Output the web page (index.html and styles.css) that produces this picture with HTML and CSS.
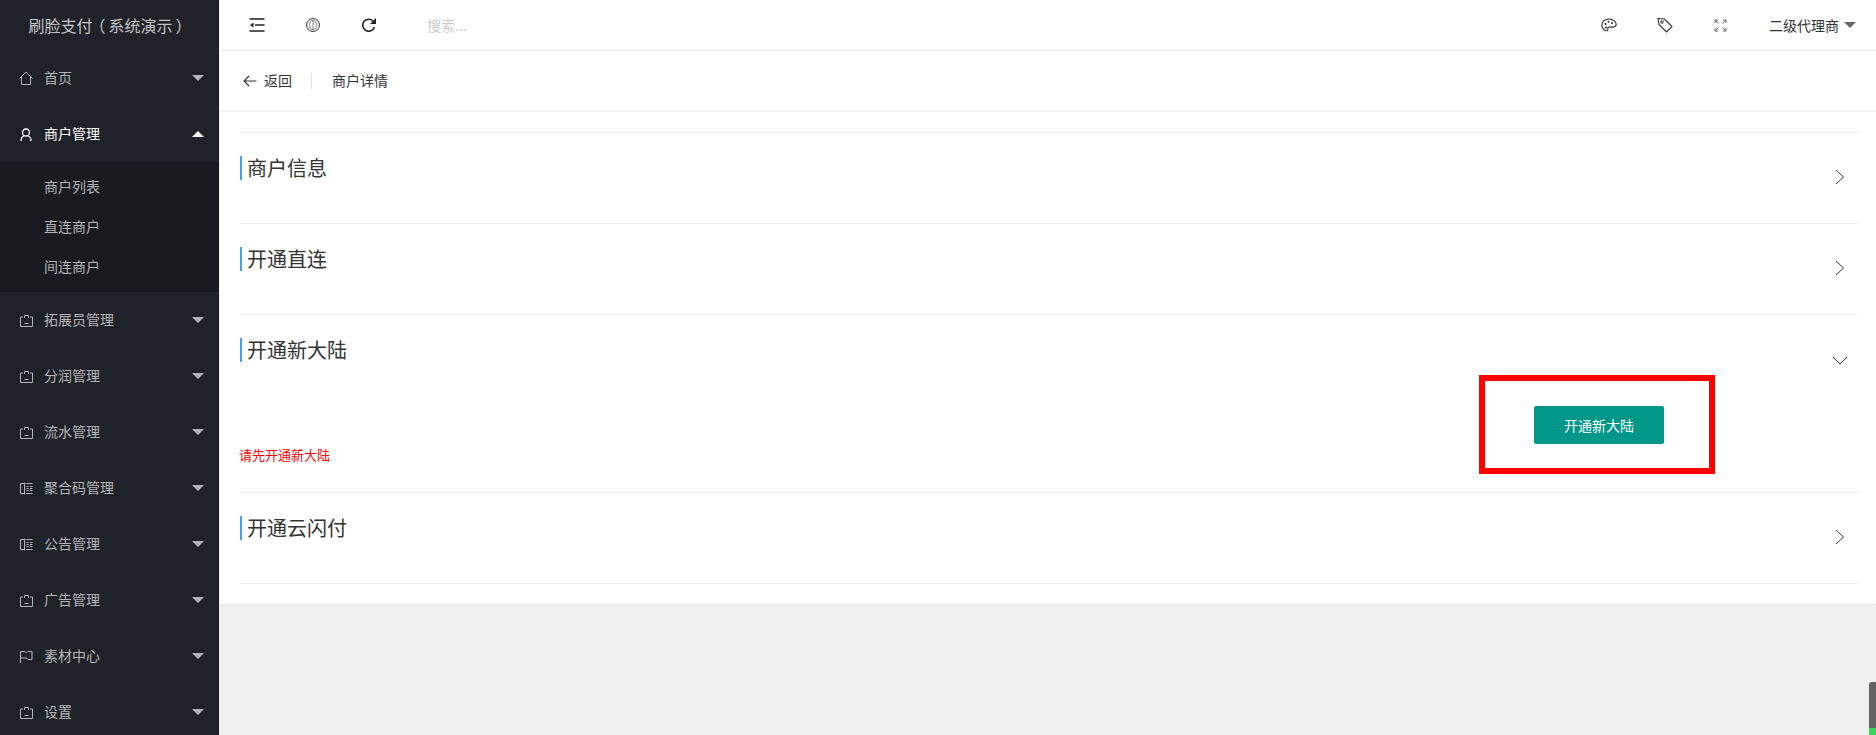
FILE: index.html
```html
<!DOCTYPE html>
<html lang="zh-CN">
<head>
  <meta charset="UTF-8" />
  <title>商户详情</title>
  <link rel="stylesheet" href="styles.css">
</head>
<body>
  <svg class="defs" width="0" height="0">
    <symbol id="i-clip" viewBox="0 0 14 14">
      <path d="M3 4H0.500v9.500h12V4H10M4.500 5V2.500h4V5M4.500 10.500h4" fill="none" stroke="currentColor"/>
    </symbol>
    <symbol id="i-book" viewBox="0 0 14 14">
      <path d="M4.500 2.500H0.500v10h4M4.500 1.500v12M6 2.500h6.500M6 12.500h6.500M6.500 5.500h2M10 5.500h2.500M6.500 7.500h2M10 7.500h2.500M6.500 9.500h2M10 9.500h2.500" fill="none" stroke="currentColor"/>
    </symbol>
    <symbol id="i-caret" viewBox="0 0 12 6">
      <path d="M0 0h12L6 6z" fill="currentColor"/>
    </symbol>
  </svg>

  <div class="layout">
    <aside class="sidebar">
      <div class="logo">刷脸支付<span class="paren-l">（</span>系统演示<span class="paren-r">）</span></div>
      <ul class="menu">
        <li class="menu-item">
          <svg class="menu-icon" viewBox="0 0 14 14"><path d="M-0.500 7.500L6 1l6.500 6.500M1.500 6v7.500h9V6" fill="none" stroke="currentColor"/></svg>
          <span class="menu-label">首页</span>
          <svg class="caret"><use href="#i-caret"/></svg>
        </li>
        <li class="menu-item active">
          <svg class="menu-icon" viewBox="0 0 14 14"><circle cx="6" cy="5.500" r="3.500" fill="none" stroke="currentColor" stroke-width="1.300"/><path d="M1 14c0-3 1.500-4.500 3-5M11 14c0-3-1.500-4.500-3-5" fill="none" stroke="currentColor" stroke-width="1.300"/></svg>
          <span class="menu-label">商户管理</span>
          <svg class="caret up"><use href="#i-caret"/></svg>
        </li>
        <li>
          <ul class="submenu">
            <li>商户列表</li>
            <li>直连商户</li>
            <li>间连商户</li>
          </ul>
        </li>
        <li class="menu-item">
          <svg class="menu-icon"><use href="#i-clip"/></svg>
          <span class="menu-label">拓展员管理</span>
          <svg class="caret"><use href="#i-caret"/></svg>
        </li>
        <li class="menu-item">
          <svg class="menu-icon"><use href="#i-clip"/></svg>
          <span class="menu-label">分润管理</span>
          <svg class="caret"><use href="#i-caret"/></svg>
        </li>
        <li class="menu-item">
          <svg class="menu-icon"><use href="#i-clip"/></svg>
          <span class="menu-label">流水管理</span>
          <svg class="caret"><use href="#i-caret"/></svg>
        </li>
        <li class="menu-item">
          <svg class="menu-icon"><use href="#i-book"/></svg>
          <span class="menu-label">聚合码管理</span>
          <svg class="caret"><use href="#i-caret"/></svg>
        </li>
        <li class="menu-item">
          <svg class="menu-icon"><use href="#i-book"/></svg>
          <span class="menu-label">公告管理</span>
          <svg class="caret"><use href="#i-caret"/></svg>
        </li>
        <li class="menu-item">
          <svg class="menu-icon"><use href="#i-clip"/></svg>
          <span class="menu-label">广告管理</span>
          <svg class="caret"><use href="#i-caret"/></svg>
        </li>
        <li class="menu-item">
          <svg class="menu-icon" viewBox="0 0 14 14"><path d="M0.500 14V2.500h4.500l1.500 1.500 1.500-1.500h4v8h-4L6.500 9H0.500" fill="none" stroke="currentColor"/></svg>
          <span class="menu-label">素材中心</span>
          <svg class="caret"><use href="#i-caret"/></svg>
        </li>
        <li class="menu-item">
          <svg class="menu-icon"><use href="#i-clip"/></svg>
          <span class="menu-label">设置</span>
          <svg class="caret"><use href="#i-caret"/></svg>
        </li>
      </ul>
    </aside>

    <div class="main">
      <header class="topbar">
        <div class="tools">
          <svg class="tool-fold" viewBox="0 0 16 14"><path d="M0.500 1h15M6 7h9.500M0.500 13h15" fill="none" stroke="#222" stroke-width="1.500"/><path d="M1 7l3.500-2.500v5z" fill="#222"/></svg>
          <svg class="tool-globe" viewBox="0 0 14 14"><circle cx="7" cy="7" r="6.400" fill="none" stroke="#2a2a2a" stroke-width="1"/><ellipse cx="7" cy="7" rx="3.400" ry="4.500" fill="none" stroke="#555" stroke-width="0.700"/><path d="M7 2.500v9" fill="none" stroke="#555" stroke-width="0.700"/></svg>
          <svg class="tool-refresh" viewBox="0 0 14 14"><path d="M12.500 9a6 6 0 1 1-1-5.500" fill="none" stroke="#222" stroke-width="1.600"/><path d="M14 0v6H8z" fill="#222"/></svg>
          <span class="search">搜索...</span>
        </div>
        <div class="tools-right">
          <svg class="tool-palette" viewBox="0 0 16 14"><path d="M8 1C4 1 0.800 3.500 0.800 7c0 2.500 1.500 4.500 3.700 5.500 2 .8 2.500-.5 2.300-1.700-.2-1.200.5-2 1.700-1.800 2 .3 6.700.5 6.700-2.500C15.200 3.500 12 1 8 1z" fill="none" stroke="#2a2a2a" stroke-width="1.100"/><circle cx="4.500" cy="6" r="1" fill="#2a2a2a"/><circle cx="7.500" cy="3.800" r="1" fill="#2a2a2a"/><circle cx="11" cy="5" r="1" fill="#2a2a2a"/><circle cx="5" cy="9.500" r="1" fill="#2a2a2a"/></svg>
          <svg class="tool-tag" viewBox="0 0 16 16"><path d="M1 1.500l6.500 0.500 7.500 7.500-5.500 5.500L2 7.500z" fill="none" stroke="#333" stroke-width="1.100"/><circle cx="5" cy="5" r="1.300" fill="none" stroke="#333"/></svg>
          <svg class="tool-full" viewBox="0 0 13 13"><path d="M1 1l3.500 3.500M1 1v3M1 1h3M12 1L8.500 4.500M12 1v3M12 1H9M1 12l3.500-3.500M1 12V9M1 12h3M12 12L8.500 8.500M12 12V9M12 12H9" fill="none" stroke="#667"/></svg>
          <span class="user">二级代理商<svg class="user-caret"><use href="#i-caret"/></svg></span>
        </div>
      </header>

      <nav class="crumb">
        <svg class="back" viewBox="0 0 14 12"><path d="M13.500 6H1M6 1L1 6l5 5" fill="none" stroke="#333" stroke-width="1.100"/></svg>
        <span class="crumb-text">返回</span>
        <span class="crumb-sep"></span>
        <span class="crumb-text">商户详情</span>
      </nav>

      <div class="card">
        <section class="panel">
          <div class="panel-head">
            <h2 class="panel-title">商户信息</h2>
            <svg class="chev" viewBox="0 0 10 16"><path d="M1 1l7.500 7L1 15" fill="none" stroke="#333"/></svg>
          </div>
        </section>
        <section class="panel">
          <div class="panel-head">
            <h2 class="panel-title">开通直连</h2>
            <svg class="chev" viewBox="0 0 10 16"><path d="M1 1l7.500 7L1 15" fill="none" stroke="#333"/></svg>
          </div>
        </section>
        <section class="panel open">
          <div class="panel-head">
            <h2 class="panel-title">开通新大陆</h2>
            <svg class="chev down" viewBox="0 0 16 10"><path d="M1 1l7 7 7-7" fill="none" stroke="#333"/></svg>
          </div>
          <div class="panel-body">
            <span class="tip">请先开通新大陆</span>
            <div class="mark">
              <button class="btn" type="button">开通新大陆</button>
            </div>
          </div>
        </section>
        <section class="panel">
          <div class="panel-head">
            <h2 class="panel-title">开通云闪付</h2>
            <svg class="chev" viewBox="0 0 10 16"><path d="M1 1l7.500 7L1 15" fill="none" stroke="#333"/></svg>
          </div>
        </section>
      </div>
    </div>
  </div>

  <div class="scroll-thumb"></div>
</body>
</html>
```

FILE: styles.css
```css
* {
  box-sizing: border-box;
}

html, body {
  height: 100%;
}

body {
  margin: 0;
  overflow: hidden;
  font-family: "Noto Sans CJK SC", "Liberation Sans", sans-serif;
  font-size: 14px;
  color: #333;
  background-color: #f1f1f1;
}

ul {
  list-style: none;
  margin: 0;
  padding: 0;
}

.defs {
  position: absolute;
}

.layout {
  display: flex;
  height: 100%;
}

/* sidebar */
.sidebar {
  width: 219px;
  flex-shrink: 0;
  background-color: #20222a;
  color: #b4b5b8;
}

.logo {
  height: 50px;
  padding-right: 2px;
  line-height: 50px;
  text-align: center;
  font-size: 16px;
  color: #c4c5c7;
}

.paren-l {
  margin: 0 3px 0 -3px;
}

.paren-r {
  margin: 0 -3px 0 3px;
}

.menu-item {
  display: flex;
  align-items: center;
  height: 56px;
  padding: 0 15px 0 20px;
}

.menu-item.active {
  color: #fff;
}

.menu-icon {
  width: 14px;
  height: 14px;
  margin-right: 10px;
  overflow: visible;
}

.menu-label {
  flex: 1;
  padding-bottom: 2px;
}

.caret {
  width: 12px;
  height: 6px;
  color: #b4b5b8;
}

.caret.up {
  color: #fff;
  transform: rotate(180deg);
}

.submenu {
  padding: 5px 0;
  background-color: #191b20;
}

.submenu li {
  height: 40px;
  line-height: 38px;
  padding-left: 44px;
}

/* top bar */
.main {
  flex: 1;
  min-width: 0;
  border-left: 1px solid #f0f0f0;
}

.topbar {
  display: flex;
  align-items: center;
  justify-content: space-between;
  height: 51px;
  padding: 0 20px 0 29px;
  background-color: #fff;
  border-bottom: 1px solid #e6e6ee;
}

.tools, .tools-right {
  display: flex;
  align-items: center;
}

.tool-fold {
  width: 16px;
  height: 14px;
  margin-right: 41px;
}

.tool-globe {
  width: 14px;
  height: 14px;
  margin-right: 42px;
}

.tool-refresh {
  width: 14px;
  height: 14px;
  margin-right: 51px;
}

.tool-palette {
  width: 16px;
  height: 14px;
  margin-right: 40px;
}

.tool-tag {
  width: 16px;
  height: 16px;
  margin-right: 41px;
}

.tool-full {
  width: 13px;
  height: 13px;
  margin-right: 42px;
}

.search {
  color: #ccc;
}

.user {
  display: flex;
  align-items: center;
  color: #333;
}

.user-caret {
  width: 12px;
  height: 6px;
  margin-left: 5px;
  color: #666;
}

/* breadcrumb */
.crumb {
  display: flex;
  align-items: center;
  height: 61px;
  padding-left: 23px;
  background-color: #fff;
  border-bottom: 1px solid #f0f0f0;
}

.back {
  width: 14px;
  height: 12px;
  margin-right: 7px;
}

.crumb-text {
  padding-bottom: 2px;
}

.crumb-sep {
  width: 1px;
  height: 16px;
  margin: 0 20px 0 19px;
  background-color: #e2e2e2;
}

/* card with panels */
.card {
  padding: 20px 18px 20px 20px;
  background-color: #fff;
  border-radius: 0 0 0 2px;
  box-shadow: 0 1px 2px rgba(0, 0, 0, 0.04);
}

.panel {
  padding-bottom: 30px;
  border-top: 1px solid #eeeef2;
}

.panel:last-child {
  border-bottom: 1px solid #eeeef2;
}

.panel.open {
  padding-bottom: 18px;
}

.panel-head {
  display: flex;
  align-items: flex-start;
  justify-content: space-between;
  height: 60px;
  padding-top: 23px;
}

.panel-title {
  height: 24px;
  margin: 0;
  padding-left: 5px;
  line-height: 24px;
  font-size: 20px;
  font-weight: normal;
  color: #333;
  border-left: 2px solid #409eff;
}

.chev {
  width: 10px;
  height: 16px;
  margin: 13px 13px 0 0;
}

.chev.down {
  width: 16px;
  height: 10px;
  margin: 18px 10px 0 0;
}

.panel-body {
  display: flex;
  align-items: flex-end;
  justify-content: space-between;
  padding-right: 143px;
}

.tip {
  margin: 0 0 9px -1px;
  font-size: 13px;
  line-height: 20px;
  color: #f00;
}

.mark {
  display: flex;
  align-items: center;
  justify-content: center;
  width: 236px;
  height: 99px;
  padding-left: 4px;
  border: 6px solid #f00;
}

.btn {
  width: 130px;
  height: 38px;
  padding: 0;
  border: none;
  border-radius: 2px;
  font-family: inherit;
  font-size: 14px;
  color: #fff;
  background-color: #009688;
  cursor: pointer;
}

/* page scrollbar, clipped by the window */
.scroll-thumb {
  position: absolute;
  right: 0;
  bottom: 0;
  width: 7px;
  height: 53px;
  border-radius: 3px 0 0 0;
  background: linear-gradient(#636363 46px, #3bd45f 46px);
}
```
